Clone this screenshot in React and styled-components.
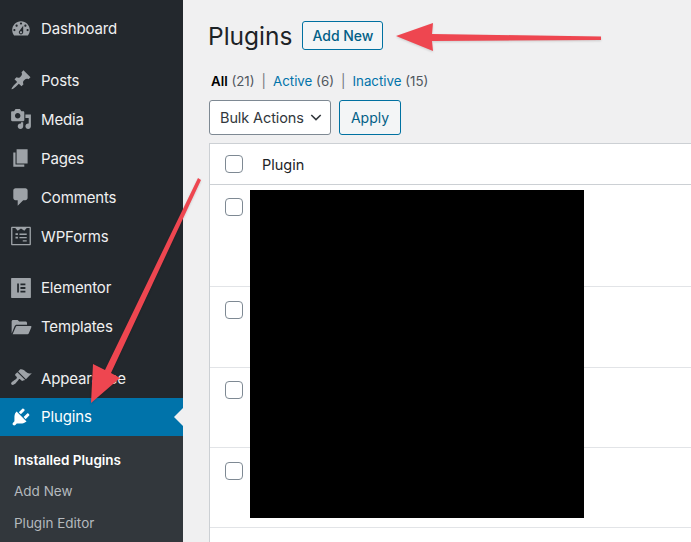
import React from "react";
import styled, { createGlobalStyle } from "styled-components";

const GlobalStyle = createGlobalStyle`
  html, body {
    margin: 0;
    padding: 0;
    height: 542px;
    overflow: hidden;
    background: #f0f0f1;
    font-family: Inter, "Liberation Sans", sans-serif;
  }
`;

const ICONS = {
  dashboard:
    "M3.76 16h12.48c1.1-1.37 1.76-3.11 1.76-5 0-4.42-3.58-8-8-8s-8 3.58-8 8c0 1.89.66 3.63 1.76 5zM10 4c.55 0 1 .45 1 1s-.45 1-1 1-1-.45-1-1 .45-1 1-1zM6 6c.55 0 1 .45 1 1s-.45 1-1 1-1-.45-1-1 .45-1 1-1zm8 0c.55 0 1 .45 1 1s-.45 1-1 1-1-.45-1-1 .45-1 1-1zm-5.37 5.55L12 7v6c0 1.1-.9 2-2 2s-2-.9-2-2c0-.57.24-1.08.63-1.45zM4 10c.55 0 1 .45 1 1s-.45 1-1 1-1-.45-1-1 .45-1 1-1zm12 0c.55 0 1 .45 1 1s-.45 1-1 1-1-.45-1-1 .45-1 1-1zm-5 3c0-.55-.45-1-1-1s-1 .45-1 1 .45 1 1 1 1-.45 1-1z",
  posts:
    "M10.44 3.02l1.82-1.82 6.36 6.35-1.83 1.82c-1.05-.68-2.48-.57-3.41.36l-.75.75c-.92.93-1.04 2.35-.35 3.41l-1.83 1.82-2.41-2.41-2.8 2.79c-.42.42-3.38 2.71-3.8 2.29s1.86-3.39 2.28-3.81l2.79-2.79L4.1 9.36l1.83-1.82c1.05.69 2.48.57 3.4-.36l.75-.75c.93-.92 1.05-2.35.36-3.41z",
  media:
    "M13 11V4c0-.55-.45-1-1-1h-1.67L9 1H5L3.67 3H2c-.55 0-1 .45-1 1v7c0 .55.45 1 1 1h10c.55 0 1-.45 1-1zM7 4.5c1.38 0 2.5 1.12 2.5 2.5S8.38 9.5 7 9.5 4.5 8.38 4.5 7 5.62 4.5 7 4.5zM14 6h5v10.5c0 1.38-1.12 2.5-2.5 2.5S14 17.88 14 16.5s1.12-2.5 2.5-2.5c.17 0 .34.02.5.05V9h-3V6zm-4 8.05V13h2v3.5c0 1.38-1.12 2.5-2.5 2.5S7 17.88 7 16.5 8.12 14 9.5 14c.17 0 .34.02.5.05z",
  pages: "M6 15V2h10v13H6zm-1 1h8v2H3V5h2v11z",
  comments:
    "M5 2h9c1.1 0 2 .9 2 2v7c0 1.1-.9 2-2 2h-2l-5 5v-5H5c-1.1 0-2-.9-2-2V4c0-1.1.9-2 2-2z",
  wpforms:
    "M2 1.500h16c.6 0 1 .4 1 1v15c0 .6-.4 1-1 1H2c-.6 0-1-.4-1-1v-15c0-.6.4-1 1-1zm.2 1.200v14.600h15.600V2.700h-2.600L13 5.200 10 3.200 7 5.200 4.800 2.700H2.200zM5 7.600h2.200v1.600H5V7.600zm3.600.2h6.600V9H8.600V7.800zM5 10.600h2.200v1.600H5v-1.600zm3.600.2h6.600V12H8.600v-1.200zm3 3h3.600V15h-3.600v-1.200z",
  elementor:
    "M1.500 1h17c.3 0 .5.2.5.5v17c0 .3-.2.5-.5.5h-17c-.3 0-.5-.2-.5-.5v-17c0-.3.2-.5.5-.5zM6.500 6v8h1.600V6H6.500zm3 0v1.600h4.500V6h-4.500zm0 3.200v1.600h4.500V9.200h-4.500zm0 3.200V14h4.500v-1.600h-4.500z",
  templates:
    "M1.500 5c0-.8.6-1.400 1.400-1.400h4l1.500 1.500h5.700c.8 0 1.400.6 1.400 1.400V8H6.200c-.9 0-1.700.5-2 1.400l-2.700 6.500V5zm4.700 4.200h12.600c.5 0 .8.500.6 1l-2.300 5.500c-.2.500-.6.800-1.200.8H2.400l2.800-6.600c.2-.4.600-.7 1-.7z",
  appearance:
    "M14.48 11.06L7.41 3.99l1.5-1.5c.5-.56 2.3-.47 3.51.32 1.21.8 1.43 1.28 2.91 2.1 1.18.64 2.45 1.26 4.45.85zm-.71.71L6.7 4.7 4.93 6.47c-.39.39-.39 1.02 0 1.41l1.06 1.06c.39.39.39 1.03 0 1.42-.6.6-1.43 1.11-2.21 1.69-.35.26-.7.53-1.01.84C1.43 13.23.4 14.91 1.4 15.9c.99 1 2.67-.03 4.02-1.37.31-.31.58-.66.84-1.01.58-.78 1.09-1.61 1.69-2.21.39-.39 1.02-.39 1.41 0l1.06 1.06c.39.39 1.02.39 1.41 0z",
  plugins:
    "M13.11 4.36L9.87 7.6 8 5.73l3.24-3.24c.35-.34 1.05-.2 1.56.32.52.51.66 1.21.31 1.55zm-8 1.77l.91-1.12 9.01 9.01-1.19.84c-.71.71-2.63 1.16-3.82 1.16H6.14L4.9 17.26c-.59.59-1.54.59-2.12 0-.59-.58-.59-1.53 0-2.12l1.24-1.24v-3.88c0-1.13.4-3.19 1.09-3.89zm7.26 3.97l3.24-3.24c.34-.35 1.04-.21 1.55.31.52.51.66 1.21.31 1.55l-3.24 3.25z",
};

const MENU = [
  [["dashboard", "Dashboard"]],
  [
    ["posts", "Posts"],
    ["media", "Media"],
    ["pages", "Pages"],
    ["comments", "Comments"],
    ["wpforms", "WPForms"],
  ],
  [
    ["elementor", "Elementor"],
    ["templates", "Templates"],
  ],
  [
    ["appearance", "Appearance"],
    ["plugins", "Plugins"],
  ],
];

const Page = styled.div`
  display: flex;
  width: 691px;
  height: 542px;
  position: relative;
  overflow: hidden;
`;

const Sidebar = styled.aside`
  width: 183px;
  flex: none;
  display: flex;
  flex-direction: column;
  background: #23282d;
  padding-top: 9px;
  box-sizing: border-box;
`;

const MenuGroup = styled.div`
  display: flex;
  flex-direction: column;
  margin-bottom: ${(p) => (p.$last ? 0 : 12.5)}px;
`;

const MenuItem = styled.div`
  position: relative;
  display: flex;
  align-items: center;
  gap: 9px;
  height: ${(p) => (p.$active ? 38.5 : 39)}px;
  padding-left: 10px;
  font-size: 15px;
  letter-spacing: -0.15px;
  color: ${(p) => (p.$active ? "#ffffff" : "#f0f0f1")};
  background: ${(p) => (p.$active ? "#0073aa" : "transparent")};
  ${(p) =>
    p.$active &&
    `&::after {
      content: "";
      position: absolute;
      right: 0;
      top: 10px;
      border: 9px solid transparent;
      border-left: 0;
      border-right-color: #f0f0f1;
    }`}
`;

const MenuIcon = styled.svg`
  width: 22px;
  height: 22px;
  flex: none;
  fill: ${(p) => (p.$active ? "#ffffff" : "#9ea3a8")};
`;

const Submenu = styled.div`
  flex: 1;
  display: flex;
  flex-direction: column;
  background: #32373c;
  padding-top: 8px;
`;

const SubItem = styled.div`
  height: 31.5px;
  display: flex;
  align-items: center;
  padding-left: 14px;
  font-size: 13.5px;
  color: ${(p) => (p.$current ? "#ffffff" : "#b4b9be")};
  font-weight: ${(p) => (p.$current ? 600 : 400)};
`;

const Main = styled.main`
  flex: 1;
  min-width: 0;
  padding: 21px 0 0 25px;
  box-sizing: border-box;
  overflow: hidden;
`;

const TitleRow = styled.div`
  display: flex;
  align-items: center;
  gap: 10px;
  height: 29px;
`;

const Title = styled.h1`
  margin: 0;
  font-size: 24.5px;
  font-weight: 400;
  color: #1d2327;
`;

const AddNew = styled.button`
  height: 29px;
  width: 81px;
  padding: 0;
  border: 1px solid #0071a1;
  border-radius: 3px;
  background: #f3f5f6;
  color: #016087;
  font: 500 14px Inter, sans-serif;
`;

const Filters = styled.ul`
  display: flex;
  align-items: center;
  margin: 21px 0 0 3px;
  padding: 0;
  list-style: none;
  font-size: 13.3px;
  color: #50575e;
  height: 20px;
`;

const Filter = styled.li`
  white-space: pre;
`;

const FilterLabel = styled.span`
  color: ${(p) => (p.$current ? "#000000" : "#0073aa")};
  font-weight: ${(p) => (p.$current ? 600 : 400)};
`;

const Divider = styled.span`
  margin: 0 7px;
  color: #72777c;
`;

const Actions = styled.div`
  display: flex;
  gap: 8px;
  margin: 9px 0 0 1px;
`;

const BulkSelect = styled.div`
  display: flex;
  align-items: center;
  justify-content: space-between;
  width: 122px;
  height: 35px;
  box-sizing: border-box;
  padding: 0 8px 0 10px;
  background: #ffffff;
  border: 1px solid #7e8993;
  border-radius: 3px;
  font-size: 14.5px;
  letter-spacing: -0.1px;
  white-space: nowrap;
  color: #32373c;
`;

const Apply = styled.button`
  width: 62px;
  height: 35px;
  padding: 0;
  background: #f3f5f6;
  border: 1px solid #0071a1;
  border-radius: 3px;
  color: #016087;
  font: 400 14px Inter, sans-serif;
`;

const Table = styled.div`
  margin: 8px 0 0 1px;
  background: #ffffff;
  border: 1px solid #ccd0d4;
  border-right: 0;
  border-bottom: 0;
  display: flex;
  flex-direction: column;
`;

const Row = styled.div`
  display: flex;
  height: ${(p) => p.$height}px;
  box-sizing: border-box;
  padding: ${(p) => p.$pad}px 0 0 15px;
  border-bottom: 1px solid ${(p) => (p.$head ? "#ccd0d4" : "#e2e4e7")};
  align-items: ${(p) => (p.$head ? "center" : "flex-start")};
  gap: 19px;
  font-size: 14.5px;
  color: #1d2327;
`;

const Check = styled.span`
  width: 18px;
  height: 18px;
  box-sizing: border-box;
  flex: none;
  background: #ffffff;
  border: 1px solid #7e8993;
  border-radius: 4px;
`;

const Redaction = styled.div`
  position: absolute;
  left: 250px;
  top: 190px;
  width: 334px;
  height: 328px;
  background: #000000;
`;

const Arrows = styled.svg`
  position: absolute;
  left: 0;
  top: 0;
  pointer-events: none;
  filter: drop-shadow(0 1px 1px rgba(0, 0, 0, 0.15));
`;

const ROWS = [
  [102, 13],
  [81, 14],
  [80, 13],
  [80, 14],
  [40, 14],
];

function App() {
  return (
    <Page>
      <GlobalStyle />
      <Sidebar>
        {MENU.map((group, i) => (
          <MenuGroup key={group[0][0]} $last={i === MENU.length - 1}>
            {group.map(([icon, label]) => (
              <MenuItem key={icon} $active={icon === "plugins"}>
                <MenuIcon viewBox="0 0 20 20" $active={icon === "plugins"}>
                  <path fillRule="evenodd" d={ICONS[icon]} />
                </MenuIcon>
                {label}
              </MenuItem>
            ))}
          </MenuGroup>
        ))}
        <Submenu>
          <SubItem $current>Installed Plugins</SubItem>
          <SubItem>Add New</SubItem>
          <SubItem>Plugin Editor</SubItem>
        </Submenu>
      </Sidebar>
      <Main>
        <TitleRow>
          <Title>Plugins</Title>
          <AddNew>Add New</AddNew>
        </TitleRow>
        <Filters>
          <Filter>
            <FilterLabel $current>All</FilterLabel> (21)
          </Filter>
          <Divider>|</Divider>
          <Filter>
            <FilterLabel>Active</FilterLabel> (6)
          </Filter>
          <Divider>|</Divider>
          <Filter>
            <FilterLabel>Inactive</FilterLabel> (15)
          </Filter>
        </Filters>
        <Actions>
          <BulkSelect>
            Bulk Actions
            <svg width="12" height="7" viewBox="0 0 14 8" fill="none" stroke="#32373c" strokeWidth="1.8">
              <path d="M1.500 1 7 6.500 12.500 1" />
            </svg>
          </BulkSelect>
          <Apply>Apply</Apply>
        </Actions>
        <Table>
          <Row $head $height={41} $pad={0}>
            <Check />
            Plugin
          </Row>
          {ROWS.map(([height, pad], i) => (
            <Row key={i} $height={height} $pad={pad}>
              <Check />
            </Row>
          ))}
        </Table>
      </Main>
      <Redaction />
      <Arrows width="691" height="542" viewBox="0 0 691 542">
        <path fill="#ee4650" d="M396 36 433 23 432 34 601 36.500 601 40 432 41 433 51z" />
        <path fill="#ee4650" d="M91 403 93 364 105 370 198 178 201 180 111 373 120 378z" />
      </Arrows>
    </Page>
  );
}

export default App;
